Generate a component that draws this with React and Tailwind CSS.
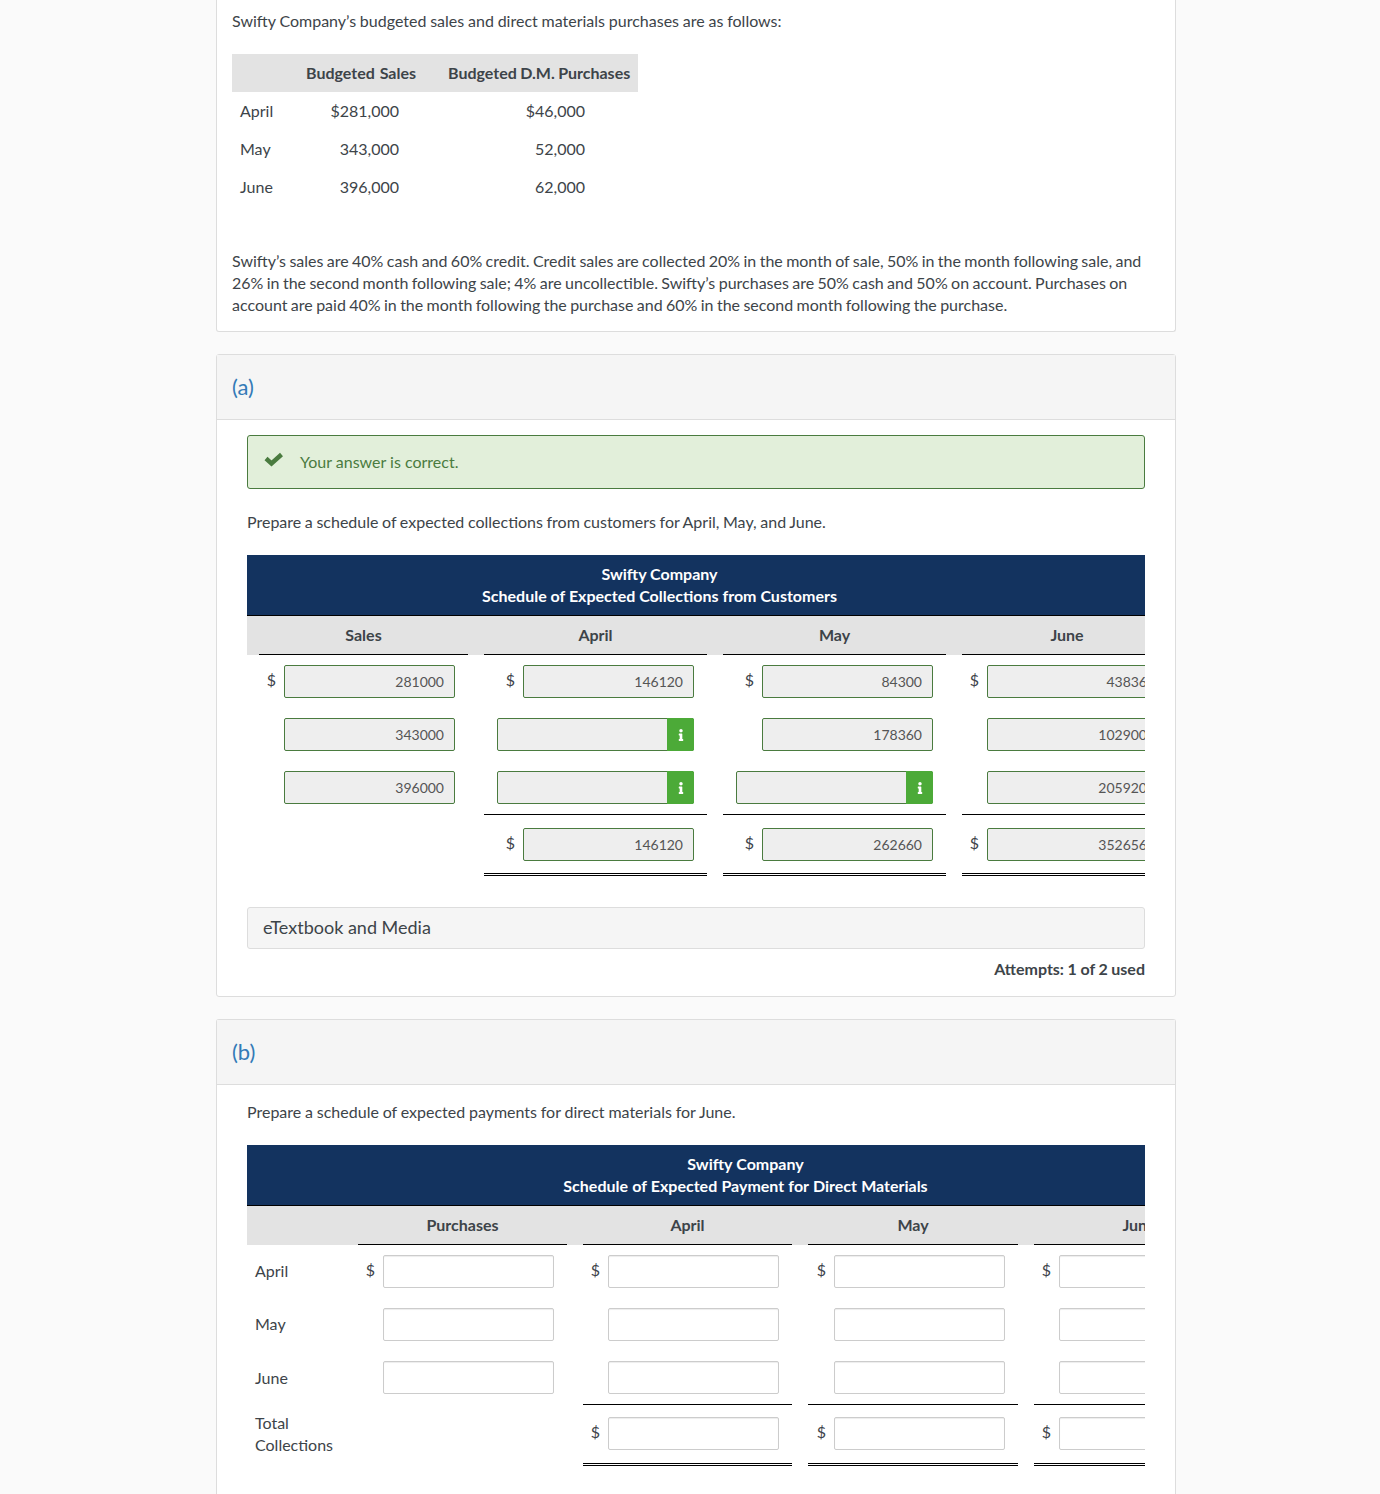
import { FaInfo } from 'react-icons/fa';

const BUDGET_ROWS = [
  ['April', '$281,000', '$46,000'],
  ['May', '343,000', '52,000'],
  ['June', '396,000', '62,000'],
];

// value: text shown, null for an empty one with the info addon
function GradedField({ value, dollar }) {
  return (
    <>
      {dollar && <span className="leading-[30px]">$</span>}
      {value === null ? (
        <div className="flex h-[33px] w-[197px] rounded-[2px] border border-[#4a7b3f] bg-[#eeeeee]">
          <div className="flex-1" />
          <div className="-my-px -mr-px flex w-[27px] items-center justify-center rounded-r-[2px] bg-[#4caa38] text-white">
            <FaInfo size={12} />
          </div>
        </div>
      ) : (
        <div className="h-[33px] w-[171px] shrink-0 rounded-[2px] border border-[#4a7b3f] bg-[#eeeeee] pr-[10px] text-right text-sm leading-[31px] text-[#555555]">
          {value}
        </div>
      )}
    </>
  );
}

function EmptyField({ dollar }) {
  return (
    <>
      {dollar && <span className="leading-[30px]">$</span>}
      <input className="h-[33px] w-[171px] shrink-0 rounded-[2px] border border-[#cccccc] bg-white text-sm shadow-[inset_0_1px_1px_rgba(0,0,0,0.075)]" />
    </>
  );
}

function Cell({ line, pad, last, children }) {
  const lineClass = line === 'single' ? 'border-b border-black pb-[10px]' : line === 'double' ? 'border-b-[3px] border-double border-black' : '';
  return (
    <div className={`flex items-start justify-end gap-2 ${last ? 'pr-[14px]' : 'pr-[13px]'} ${pad} ${lineClass}`}>
      {children}
    </div>
  );
}

function SectionHeader({ label }) {
  return (
    <div className="flex h-[65px] items-center border-b border-[#dddddd] bg-[#f5f5f5] px-[15px] text-[22px] text-[#337ab7]">
      {label}
    </div>
  );
}

function HeaderCell({ children }) {
  return (
    <div className="flex h-[39px] items-center justify-center border-b border-black font-bold">
      {children}
    </div>
  );
}

function CollectionsTable() {
  const grid = 'grid grid-cols-[209px_223px_223px_210px] gap-x-4 pl-[12px]';
  return (
    <div className="mt-[22px] w-[898px] overflow-hidden">
      <div className="w-[925px]">
        <div className="h-[61px] border-b border-black bg-[#13335f] pt-2 font-bold text-white [word-spacing:0]">
          <div className="w-[825px] text-center">
            <div>Swifty Company</div>
            <div>Schedule of Expected Collections from Customers</div>
          </div>
        </div>
        <div className={`${grid} bg-[#e3e3e3]`}>
          <HeaderCell>Sales</HeaderCell>
          <HeaderCell>April</HeaderCell>
          <HeaderCell>May</HeaderCell>
          <HeaderCell>June</HeaderCell>
        </div>
        <div className={grid}>
          <Cell pad="pt-[10px]"><GradedField dollar value="281000" /></Cell>
          <Cell pad="pt-[10px]"><GradedField dollar value="146120" /></Cell>
          <Cell pad="pt-[10px]"><GradedField dollar value="84300" /></Cell>
          <Cell pad="pt-[10px]" last><GradedField dollar value="43836" /></Cell>
        </div>
        <div className={grid}>
          <Cell pad="pt-[20px]"><GradedField value="343000" /></Cell>
          <Cell pad="pt-[20px]"><GradedField value={null} /></Cell>
          <Cell pad="pt-[20px]"><GradedField value="178360" /></Cell>
          <Cell pad="pt-[20px]" last><GradedField value="102900" /></Cell>
        </div>
        <div className={grid}>
          <Cell pad="pt-[20px]"><GradedField value="396000" /></Cell>
          <Cell pad="pt-[20px]" line="single"><GradedField value={null} /></Cell>
          <Cell pad="pt-[20px]" line="single"><GradedField value={null} /></Cell>
          <Cell pad="pt-[20px]" line="single" last><GradedField value="205920" /></Cell>
        </div>
        <div className={grid}>
          <div />
          <Cell pad="pt-[13px] pb-[12px]" line="double"><GradedField dollar value="146120" /></Cell>
          <Cell pad="pt-[13px] pb-[12px]" line="double"><GradedField dollar value="262660" /></Cell>
          <Cell pad="pt-[13px] pb-[12px]" line="double" last><GradedField dollar value="352656" /></Cell>
        </div>
      </div>
    </div>
  );
}

function PaymentsTable() {
  const grid = 'grid grid-cols-[95px_209px_209px_210px_210px] gap-x-4';
  return (
    <div className="mt-[22px] w-[898px] overflow-hidden">
      <div className="w-[997px]">
        <div className="h-[61px] border-b border-black bg-[#13335f] pt-2 text-center font-bold text-white [word-spacing:0.3px]">
          <div>Swifty Company</div>
          <div>Schedule of Expected Payment for Direct Materials</div>
        </div>
        <div className={`${grid} bg-[#e3e3e3]`}>
          <div />
          <HeaderCell>Purchases</HeaderCell>
          <HeaderCell>April</HeaderCell>
          <HeaderCell>May</HeaderCell>
          <HeaderCell>June</HeaderCell>
        </div>
        <div className={grid}>
          <div className="pl-2 pt-[15px]">April</div>
          <Cell pad="pt-[10px]"><EmptyField dollar /></Cell>
          <Cell pad="pt-[10px]"><EmptyField dollar /></Cell>
          <Cell pad="pt-[10px]"><EmptyField dollar /></Cell>
          <Cell pad="pt-[10px]" last><EmptyField dollar /></Cell>
        </div>
        <div className={grid}>
          <div className="pl-2 pt-[25px]">May</div>
          <Cell pad="pt-[20px]"><EmptyField /></Cell>
          <Cell pad="pt-[20px]"><EmptyField /></Cell>
          <Cell pad="pt-[20px]"><EmptyField /></Cell>
          <Cell pad="pt-[20px]" last><EmptyField /></Cell>
        </div>
        <div className={grid}>
          <div className="pl-2 pt-[26px]">June</div>
          <Cell pad="pt-[20px]"><EmptyField /></Cell>
          <Cell pad="pt-[20px]" line="single"><EmptyField /></Cell>
          <Cell pad="pt-[20px]" line="single"><EmptyField /></Cell>
          <Cell pad="pt-[20px]" line="single" last><EmptyField /></Cell>
        </div>
        <div className={grid}>
          <div className="pl-2 pt-[7px]">Total Collections</div>
          <div />
          <Cell pad="pt-[12px] pb-[13px]" line="double"><EmptyField dollar /></Cell>
          <Cell pad="pt-[12px] pb-[13px]" line="double"><EmptyField dollar /></Cell>
          <Cell pad="pt-[12px] pb-[13px]" line="double" last><EmptyField dollar /></Cell>
        </div>
      </div>
    </div>
  );
}

export default function App() {
  return (
    <div className="h-[1494px] overflow-hidden bg-[#fafafa] font-['Lato',sans-serif] text-base leading-[22px] text-[#3d4449] [word-spacing:-0.5px]">
      {/* shadow of the fixed bar above the page */}
      <div className="relative z-10 h-0 shadow-[0_0_8px_rgba(0,0,0,0.18)]" />

      <div className="ml-[216px] w-[960px]">
        <div className="rounded-b-[3px] border border-t-0 border-[#dddddd] bg-white px-[15px] pb-[15px] pt-[10px]">
          <p className="[word-spacing:-0.3px]">Swifty Company’s budgeted sales and direct materials purchases are as follows:</p>

          <div className="mt-[22px] w-[406px]">
            <div className="grid h-[38px] grid-cols-[66px_126px_16px_198px] items-center bg-[#e3e3e3] font-bold">
              <div />
              <div className="pl-2 [word-spacing:1px]">Budgeted Sales</div>
              <div />
              <div className="pl-2">Budgeted D.M. Purchases</div>
            </div>
            {BUDGET_ROWS.map(([month, sales, purchases]) => (
              <div key={month} className="grid h-[38px] grid-cols-[66px_126px_16px_198px] items-center">
                <div className="pl-2">{month}</div>
                <div className="pr-[25px] text-right">{sales}</div>
                <div />
                <div className="pr-[53px] text-right">{purchases}</div>
              </div>
            ))}
          </div>

          <p className="mt-[44px] [word-spacing:-0.72px]">
            Swifty’s sales are 40% cash and 60% credit. Credit sales are collected 20% in the month of sale, 50% in the month following sale, and 26% in the second month following sale; 4% are uncollectible. Swifty’s purchases are 50% cash and 50% on account. Purchases on account are paid 40% in the month following the purchase and 60% in the second month following the purchase.
          </p>
        </div>

        <div className="mt-[22px] rounded-[3px] border border-[#dddddd] bg-white">
          <SectionHeader label="(a)" />
          <div className="px-[30px] pb-[16px] pt-[15px]">
            <div className="flex h-[54px] rounded-[3px] border border-[#4a7b3f] bg-[#e2efda] text-[#4a7b3f]">
              <svg width="20" height="15" viewBox="0 0 20 15" className="ml-[16px] mt-[16px] shrink-0">
                <polyline points="2,6.5 7.5,11.5 17.5,2.5" fill="none" stroke="currentColor" strokeWidth="4.4" />
              </svg>
              <div className="ml-[16px] mt-[15px] [word-spacing:0]">Your answer is correct.</div>
            </div>

            <p className="mt-[22px]">Prepare a schedule of expected collections from customers for April, May, and June.</p>

            <CollectionsTable />

            <div className="mt-[31px] flex h-[42px] items-center rounded-[3px] border border-[#dddddd] bg-[#f5f5f5] px-[15px] pb-[2px] text-lg [word-spacing:0]">
              eTextbook and Media
            </div>
            <div className="mt-[9px] text-right font-bold [word-spacing:-0.3px]">Attempts: 1 of 2 used</div>
          </div>
        </div>

        <div className="mt-[22px] rounded-t-[3px] border border-b-0 border-[#dddddd] bg-white">
          <SectionHeader label="(b)" />
          <div className="px-[30px] pb-[28px] pt-[16px]">
            <p className="[word-spacing:-0.3px]">Prepare a schedule of expected payments for direct materials for June.</p>
            <PaymentsTable />
          </div>
        </div>
      </div>
    </div>
  );
}
